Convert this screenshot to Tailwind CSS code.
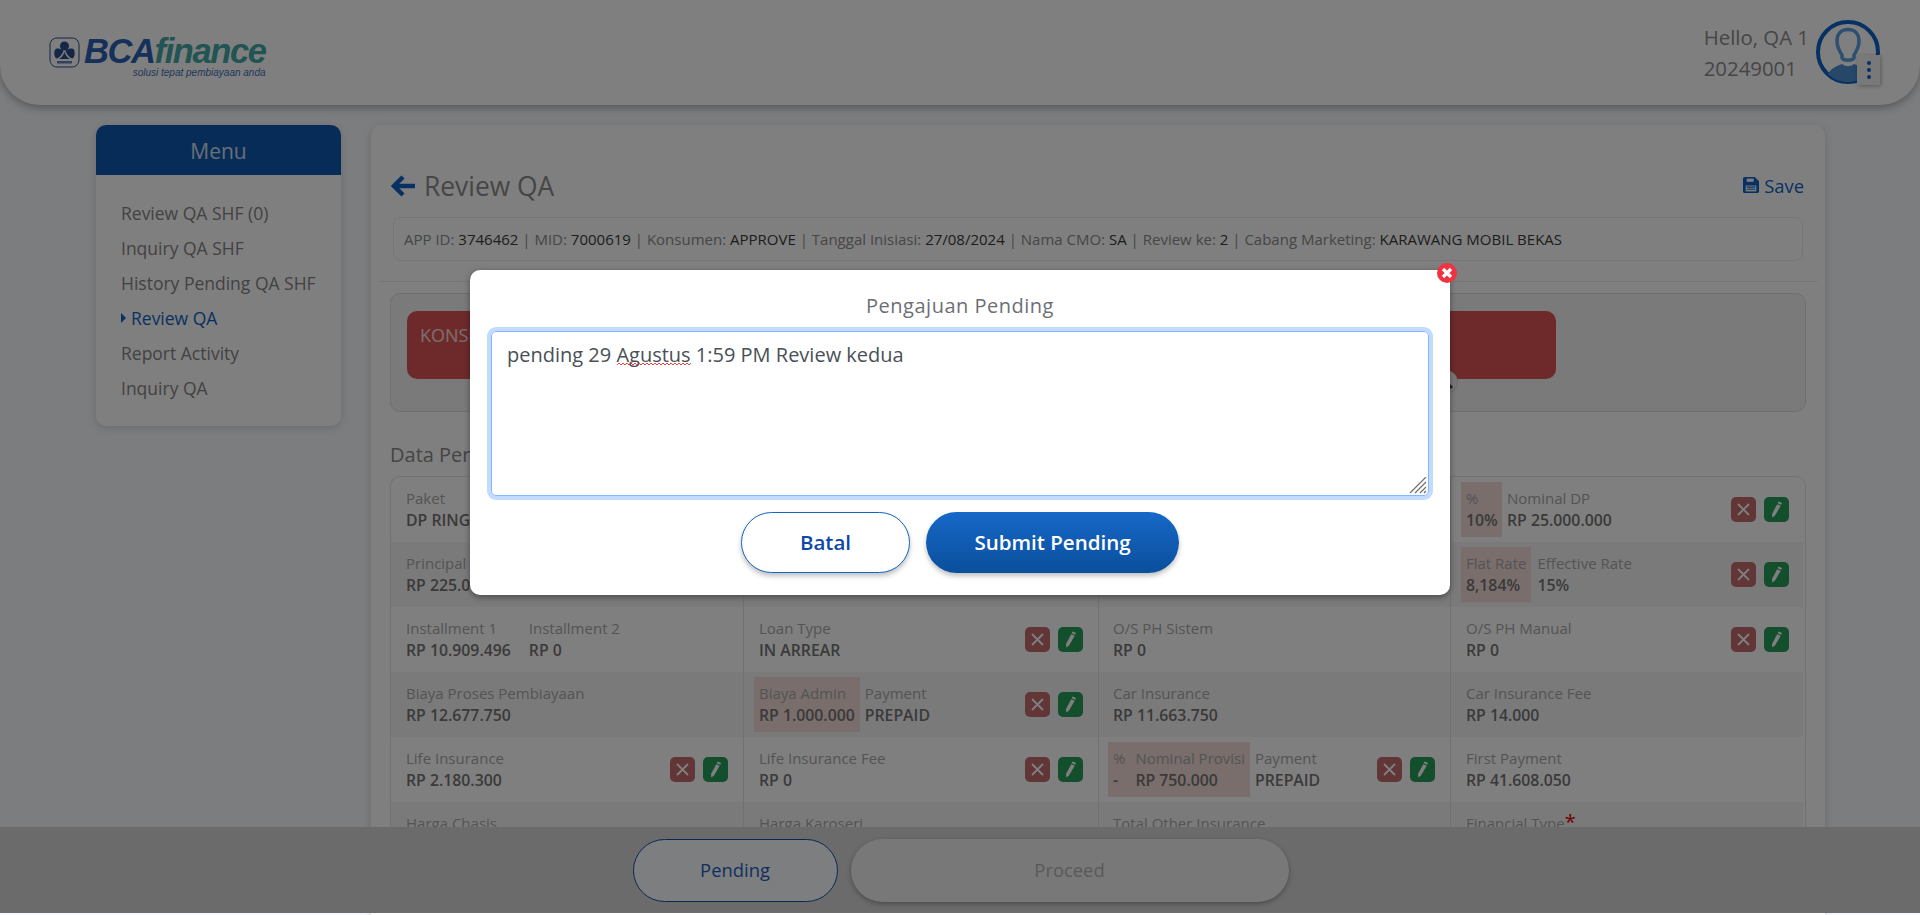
<!DOCTYPE html>
<html lang="id">
<head>
<meta charset="utf-8">
<title>Review QA</title>
<script src="https://cdn.jsdelivr.net/npm/@tailwindcss/browser@4"></script>
</head>
<body class="bg-black font-['Open_Sans',sans-serif]">
<div class="relative w-[1920px] h-[915px] overflow-hidden bg-[#f8fafd]">

  <!-- header -->
  <header class="relative z-10 h-[105px] bg-white rounded-b-[40px] shadow-[0_3px_8px_rgba(0,0,0,0.3)] flex items-center justify-between pl-[49px] pr-[40px]">
    <div class="flex items-start gap-[4px] mt-[9px]">
      <svg width="31" height="31" viewBox="0 0 31 31" class="mt-[1px]">
        <path d="M8 1H23C27 1 30 4 30 8V22C30 27 27 30 23 30H8C4 30 1 27 1 22V8C1 4 4 1 8 1Z" fill="none" stroke="#2a4f8c" stroke-width="1"/>
        <circle cx="15.500" cy="9" r="4.500" fill="#2a4f8c"/>
        <path d="M14.500 14C13 18 10 21 7.500 21.500C5 20 4.500 15 6.500 12C10 11 13 12 14.500 14ZM16.500 14C18 18 21 21 23.500 21.500C26 20 26.500 15 24.500 12C21 11 18 12 16.500 14ZM15.500 15C14 19 12 21 10 22H21C19 21 17 19 15.500 15Z" fill="#2a4f8c"/>
        <rect x="8" y="24" width="15" height="2.500" fill="#2a4f8c" opacity="0.7"/>
      </svg>
      <div class="flex flex-col items-end">
        <div class="leading-[30px] h-[30px] text-[34.500px] font-black italic font-['Liberation_Sans',sans-serif] tracking-[-1.400px]"><span class="text-[#2a60b4]">BCA</span><span class="text-[#43a8a4]">finance</span></div>
        <div class="mt-[2px] text-[10px] leading-[10px] italic font-['Liberation_Sans',sans-serif] text-[#3f70b5]">solusi tepat pembiayaan anda</div>
      </div>
    </div>
    <div class="flex items-center gap-[7px]">
      <div class="text-[20.400px] leading-[31px] text-[#8c8c8c]">
        <div>Hello, QA 1</div>
        <div>20249001</div>
      </div>
      <div class="relative w-[64px] h-[64px] -mt-[2px]">
        <svg width="64" height="64" viewBox="0 0 64 64">
          <circle cx="32" cy="32" r="30" fill="none" stroke="#0f63c4" stroke-width="4"/>
          <path d="M32 9.500C25 9.500 21 14 21 21C21 27 24 32 26 35V38C28 41 36 41 38 38V35C40 32 43 27 43 21C43 14 39 9.500 32 9.500Z" fill="none" stroke="#5aa0e0" stroke-width="3.500"/>
          <path d="M12 54C15 48 21 46 26 44C30 47 34 47 38 44C43 46 49 48 52 54C46 60 39 62 32 62C25 62 18 60 12 54Z" fill="#4f8fd0"/>
        </svg>
        <div class="absolute left-[41px] top-[35px] w-[23px] h-[30px] bg-[#f2f2f2] shadow-[1px_1px_4px_rgba(0,0,0,0.3)] flex flex-col items-center justify-center gap-[3px]">
          <span class="w-[4px] h-[4px] rounded-full bg-[#0f63c4]"></span>
          <span class="w-[4px] h-[4px] rounded-full bg-[#0f63c4]"></span>
          <span class="w-[4px] h-[4px] rounded-full bg-[#0f63c4]"></span>
        </div>
      </div>
    </div>
  </header>

  <div class="flex items-start gap-[30px] pl-[96px] pt-[20px]">
    <!-- sidebar -->
    <aside class="w-[245px] rounded-[10px] bg-white shadow-[0_2px_8px_rgba(0,0,0,0.15)] overflow-hidden">
      <div class="h-[50px] pt-[3px] bg-[#0f58ae] text-white/80 flex items-center justify-center text-[21px]">Menu</div>
      <ul class="pt-[21px] pb-[20px] pl-[25px] text-[17.500px] leading-[35px] text-[#858585]">
        <li>Review QA SHF (0)</li>
        <li>Inquiry QA SHF</li>
        <li>History Pending QA SHF</li>
        <li class="relative text-[#0f63c4] font-medium"><span class="absolute left-0 top-[12px] border-l-[5px] border-y-[5.500px] border-y-transparent border-l-[#0f63c4]"></span><span class="ml-[10px]">Review QA</span></li>
        <li>Report Activity</li>
        <li>Inquiry QA</li>
      </ul>
    </aside>

    <!-- content -->
    <main class="w-[1454px] h-[800px] rounded-[10px] bg-white shadow-[0_2px_8px_rgba(0,0,0,0.15)]">
      <div class="flex items-center justify-between pl-[20px] pr-[21px] pt-[31px] h-[92px]">
        <div class="flex items-center gap-[9px]">
          <svg width="24" height="24" viewBox="0 0 24 24"><path d="M12 3L3 12L12 21M4 12H24" fill="none" stroke="#0f63c4" stroke-width="4.500"/></svg>
          <h1 class="text-[26.400px] text-[#8c8c8c]">Review QA</h1>
        </div>
        <div class="flex items-center gap-[5px] -mt-[2px] text-[18.400px] text-[#0f63c4]">
          <svg width="16" height="16" viewBox="0 0 15 15"><path d="M0 1.500C0 .7.7 0 1.500 0H11L15 4V13.500C15 14.300 14.300 15 13.500 15H1.500C.7 15 0 14.300 0 13.500Z" fill="#0f63c4"/><rect x="3.500" y="1.500" width="6.500" height="3" fill="#fff"/><path d="M2.500 8H12.500V13.500H2.500Z" fill="#fff"/><path d="M3.500 9.500H11.500M3.500 11.500H11.500" stroke="#0f63c4"/></svg>
          <span>Save</span>
        </div>
      </div>

      <div class="mx-[22px] h-[44px] px-[10px] rounded-[8px] border border-[#ececec] flex items-center text-[15px] text-[#8c8c8c] whitespace-nowrap">
        <span>APP ID: <span class="text-[#3a3a3a]">3746462</span> | MID: <span class="text-[#3a3a3a]">7000619</span> | Konsumen: <span class="text-[#3a3a3a]">APPROVE</span> | Tanggal Inisiasi: <span class="text-[#3a3a3a]">27/08/2024</span> | Nama CMO: <span class="text-[#3a3a3a]">SA</span> | Review ke: <span class="text-[#3a3a3a]">2</span> | Cabang Marketing: <span class="text-[#3a3a3a]">KARAWANG MOBIL BEKAS</span></span>
      </div>

      <div class="mt-[20px] mx-[7px] border-t border-[#ececec]"></div>

      <div class="relative mt-[11px] mx-[19px] h-[119px] rounded-[10px] border border-[#dedede] bg-[#f5f5f5] pl-[16px] pt-[17px]">
        <div class="w-[1149px] h-[68px] rounded-[10px] bg-[#dd5555] text-white/80 text-[18px] pl-[13px] pt-[11px]">KONSUMEN</div>
        <div class="absolute left-[1043px] top-[76px] w-[24px] h-[24px] rounded-full bg-[#f2f2f2] border border-[#d5d5d5] flex items-center justify-center">
          <svg width="14" height="14" viewBox="0 0 14 14"><circle cx="6" cy="6" r="4" fill="none" stroke="#444" stroke-width="2"/><path d="M9 9L13 13" stroke="#444" stroke-width="3"/></svg>
        </div>
      </div>

      <h2 class="mt-[29px] ml-[19px] text-[20px] leading-[27px] text-[#8a8a8a]">Data Pengajuan</h2>

      <!-- data grid -->
      <div class="mt-[8px] mx-[19px] rounded-t-[10px] border border-[#e2e2e2] grid grid-cols-[353px_355px_352px_352px] text-[15px] leading-[22px] text-[#a8a8a8]">
        <!-- row 1 -->
        <div class="h-[65px] pl-[15px] pt-[10px] border-r border-[#e2e2e2]"><div>Paket</div><div class="text-[15.800px] font-semibold text-[#747474]">DP RINGAN</div></div>
        <div class="h-[65px] border-r border-[#e2e2e2]"></div>
        <div class="h-[65px] border-r border-[#e2e2e2]"></div>
        <div class="h-[65px] pl-[10px] pr-[14px] pt-[5px] flex items-start justify-between">
          <div class="flex gap-[5px]">
            <div class="h-[55px] w-[41px] bg-[#f2dcd8] px-[5px] py-[5px]"><div>%</div><div class="text-[15.800px] font-semibold text-[#747474]">10%</div></div>
            <div class="pt-[5px]"><div>Nominal DP</div><div class="text-[15.800px] font-semibold text-[#747474]">RP 25.000.000</div></div>
          </div>
          <div class="flex gap-[8px] mt-[15px]">
            <span class="w-[25px] h-[25px] rounded-[5px] bg-[#c46c6c] flex items-center justify-center"><svg width="13" height="13" viewBox="0 0 13 13"><path d="M1 1L12 12M12 1L1 12" stroke="#fff" stroke-width="1.800"/></svg></span>
            <span class="w-[25px] h-[25px] rounded-[5px] bg-[#289e5a] flex items-center justify-center"><svg width="13" height="17" viewBox="0 0 13 17"><path d="M8.500.5L12 2L11.200 3.800L7.700 2.300ZM7.200 3.300L10.700 4.800L5 14.500L2.300 16.500L2 13Z" fill="#fff"/></svg></span>
          </div>
        </div>
        <!-- row 2 -->
        <div class="h-[65px] pl-[15px] pt-[10px] bg-[#f5f5f5] border-r border-[#e2e2e2]"><div>Principal</div><div class="text-[15.800px] font-semibold text-[#747474]">RP 225.000.000</div></div>
        <div class="h-[65px] bg-[#f5f5f5] border-r border-[#e2e2e2]"></div>
        <div class="h-[65px] bg-[#f5f5f5] border-r border-[#e2e2e2]"></div>
        <div class="h-[65px] pl-[10px] pr-[14px] pt-[5px] bg-[#f5f5f5] flex items-start justify-between">
          <div class="flex gap-[6px]">
            <div class="h-[55px] bg-[#f2dcd8] px-[5px] py-[5px]"><div>Flat Rate</div><div class="text-[15.800px] font-semibold text-[#747474]">8,184%</div></div>
            <div class="pt-[5px]"><div>Effective Rate</div><div class="text-[15.800px] font-semibold text-[#747474]">15%</div></div>
          </div>
          <div class="flex gap-[8px] mt-[15px]">
            <span class="w-[25px] h-[25px] rounded-[5px] bg-[#c46c6c] flex items-center justify-center"><svg width="13" height="13" viewBox="0 0 13 13"><path d="M1 1L12 12M12 1L1 12" stroke="#fff" stroke-width="1.800"/></svg></span>
            <span class="w-[25px] h-[25px] rounded-[5px] bg-[#289e5a] flex items-center justify-center"><svg width="13" height="17" viewBox="0 0 13 17"><path d="M8.500.5L12 2L11.200 3.800L7.700 2.300ZM7.200 3.300L10.700 4.800L5 14.500L2.300 16.500L2 13Z" fill="#fff"/></svg></span>
          </div>
        </div>
        <!-- row 3 -->
        <div class="h-[65px] pl-[15px] pt-[10px] flex gap-[18px] border-r border-[#e2e2e2]">
          <div><div>Installment 1</div><div class="text-[15.800px] font-semibold text-[#747474]">RP 10.909.496</div></div>
          <div><div>Installment 2</div><div class="text-[15.800px] font-semibold text-[#747474]">RP 0</div></div>
        </div>
        <div class="h-[65px] pl-[15px] pr-[15px] pt-[10px] flex justify-between border-r border-[#e2e2e2]">
          <div><div>Loan Type</div><div class="text-[15.800px] font-semibold text-[#747474]">IN ARREAR</div></div>
          <div class="flex gap-[8px] mt-[10px]">
            <span class="w-[25px] h-[25px] rounded-[5px] bg-[#c46c6c] flex items-center justify-center"><svg width="13" height="13" viewBox="0 0 13 13"><path d="M1 1L12 12M12 1L1 12" stroke="#fff" stroke-width="1.800"/></svg></span>
            <span class="w-[25px] h-[25px] rounded-[5px] bg-[#289e5a] flex items-center justify-center"><svg width="13" height="17" viewBox="0 0 13 17"><path d="M8.500.5L12 2L11.200 3.800L7.700 2.300ZM7.200 3.300L10.700 4.800L5 14.500L2.300 16.500L2 13Z" fill="#fff"/></svg></span>
          </div>
        </div>
        <div class="h-[65px] pl-[14px] pt-[10px] border-r border-[#e2e2e2]"><div>O/S PH Sistem</div><div class="text-[15.800px] font-semibold text-[#747474]">RP 0</div></div>
        <div class="h-[65px] pl-[15px] pr-[14px] pt-[10px] flex justify-between">
          <div><div>O/S PH Manual</div><div class="text-[15.800px] font-semibold text-[#747474]">RP 0</div></div>
          <div class="flex gap-[8px] mt-[10px]">
            <span class="w-[25px] h-[25px] rounded-[5px] bg-[#c46c6c] flex items-center justify-center"><svg width="13" height="13" viewBox="0 0 13 13"><path d="M1 1L12 12M12 1L1 12" stroke="#fff" stroke-width="1.800"/></svg></span>
            <span class="w-[25px] h-[25px] rounded-[5px] bg-[#289e5a] flex items-center justify-center"><svg width="13" height="17" viewBox="0 0 13 17"><path d="M8.500.5L12 2L11.200 3.800L7.700 2.300ZM7.200 3.300L10.700 4.800L5 14.500L2.300 16.500L2 13Z" fill="#fff"/></svg></span>
          </div>
        </div>
        <!-- row 4 -->
        <div class="h-[65px] pl-[15px] pt-[10px] bg-[#f5f5f5] border-r border-[#e2e2e2]"><div>Biaya Proses Pembiayaan</div><div class="text-[15.800px] font-semibold text-[#747474]">RP 12.677.750</div></div>
        <div class="h-[65px] pl-[10px] pr-[15px] pt-[5px] bg-[#f5f5f5] flex justify-between border-r border-[#e2e2e2]">
          <div class="flex gap-[5px]">
            <div class="h-[55px] bg-[#f2dcd8] px-[5px] py-[5px]"><div>Biaya Admin</div><div class="text-[15.800px] font-semibold text-[#747474]">RP 1.000.000</div></div>
            <div class="pt-[5px]"><div>Payment</div><div class="text-[15.800px] font-semibold text-[#747474]">PREPAID</div></div>
          </div>
          <div class="flex gap-[8px] mt-[15px]">
            <span class="w-[25px] h-[25px] rounded-[5px] bg-[#c46c6c] flex items-center justify-center"><svg width="13" height="13" viewBox="0 0 13 13"><path d="M1 1L12 12M12 1L1 12" stroke="#fff" stroke-width="1.800"/></svg></span>
            <span class="w-[25px] h-[25px] rounded-[5px] bg-[#289e5a] flex items-center justify-center"><svg width="13" height="17" viewBox="0 0 13 17"><path d="M8.500.5L12 2L11.200 3.800L7.700 2.300ZM7.200 3.300L10.700 4.800L5 14.500L2.300 16.500L2 13Z" fill="#fff"/></svg></span>
          </div>
        </div>
        <div class="h-[65px] pl-[14px] pt-[10px] bg-[#f5f5f5] border-r border-[#e2e2e2]"><div>Car Insurance</div><div class="text-[15.800px] font-semibold text-[#747474]">RP 11.663.750</div></div>
        <div class="h-[65px] pl-[15px] pt-[10px] bg-[#f5f5f5]"><div>Car Insurance Fee</div><div class="text-[15.800px] font-semibold text-[#747474]">RP 14.000</div></div>
        <!-- row 5 -->
        <div class="h-[65px] pl-[15px] pr-[15px] pt-[10px] flex justify-between border-r border-[#e2e2e2]">
          <div><div>Life Insurance</div><div class="text-[15.800px] font-semibold text-[#747474]">RP 2.180.300</div></div>
          <div class="flex gap-[8px] mt-[10px]">
            <span class="w-[25px] h-[25px] rounded-[5px] bg-[#c46c6c] flex items-center justify-center"><svg width="13" height="13" viewBox="0 0 13 13"><path d="M1 1L12 12M12 1L1 12" stroke="#fff" stroke-width="1.800"/></svg></span>
            <span class="w-[25px] h-[25px] rounded-[5px] bg-[#289e5a] flex items-center justify-center"><svg width="13" height="17" viewBox="0 0 13 17"><path d="M8.500.5L12 2L11.200 3.800L7.700 2.300ZM7.200 3.300L10.700 4.800L5 14.500L2.300 16.500L2 13Z" fill="#fff"/></svg></span>
          </div>
        </div>
        <div class="h-[65px] pl-[15px] pr-[15px] pt-[10px] flex justify-between border-r border-[#e2e2e2]">
          <div><div>Life Insurance Fee</div><div class="text-[15.800px] font-semibold text-[#747474]">RP 0</div></div>
          <div class="flex gap-[8px] mt-[10px]">
            <span class="w-[25px] h-[25px] rounded-[5px] bg-[#c46c6c] flex items-center justify-center"><svg width="13" height="13" viewBox="0 0 13 13"><path d="M1 1L12 12M12 1L1 12" stroke="#fff" stroke-width="1.800"/></svg></span>
            <span class="w-[25px] h-[25px] rounded-[5px] bg-[#289e5a] flex items-center justify-center"><svg width="13" height="17" viewBox="0 0 13 17"><path d="M8.500.5L12 2L11.200 3.800L7.700 2.300ZM7.200 3.300L10.700 4.800L5 14.500L2.300 16.500L2 13Z" fill="#fff"/></svg></span>
          </div>
        </div>
        <div class="h-[65px] pl-[9px] pr-[15px] pt-[5px] flex justify-between border-r border-[#e2e2e2]">
          <div class="flex gap-[5px]">
            <div class="h-[55px] bg-[#f2dcd8] px-[5px] py-[5px] flex gap-[10px]">
              <div><div>%</div><div class="text-[15.800px] font-semibold text-[#747474]">-</div></div>
              <div><div>Nominal Provisi</div><div class="text-[15.800px] font-semibold text-[#747474]">RP 750.000</div></div>
            </div>
            <div class="pt-[5px]"><div>Payment</div><div class="text-[15.800px] font-semibold text-[#747474]">PREPAID</div></div>
          </div>
          <div class="flex gap-[8px] mt-[15px]">
            <span class="w-[25px] h-[25px] rounded-[5px] bg-[#c46c6c] flex items-center justify-center"><svg width="13" height="13" viewBox="0 0 13 13"><path d="M1 1L12 12M12 1L1 12" stroke="#fff" stroke-width="1.800"/></svg></span>
            <span class="w-[25px] h-[25px] rounded-[5px] bg-[#289e5a] flex items-center justify-center"><svg width="13" height="17" viewBox="0 0 13 17"><path d="M8.500.5L12 2L11.200 3.800L7.700 2.300ZM7.200 3.300L10.700 4.800L5 14.500L2.300 16.500L2 13Z" fill="#fff"/></svg></span>
          </div>
        </div>
        <div class="h-[65px] pl-[15px] pt-[10px]"><div>First Payment</div><div class="text-[15.800px] font-semibold text-[#747474]">RP 41.608.050</div></div>
        <!-- row 6 -->
        <div class="h-[65px] pl-[15px] pt-[10px] bg-[#f5f5f5] border-r border-[#e2e2e2]"><div>Harga Chasis</div></div>
        <div class="h-[65px] pl-[15px] pt-[10px] bg-[#f5f5f5] border-r border-[#e2e2e2]"><div>Harga Karoseri</div></div>
        <div class="h-[65px] pl-[14px] pt-[10px] bg-[#f5f5f5] border-r border-[#e2e2e2]"><div>Total Other Insurance</div></div>
        <div class="h-[65px] pl-[15px] pt-[10px] bg-[#f5f5f5]"><div>Financial Type<span class="text-[#e00000] text-[20px] leading-[10px]">*</span></div></div>
      </div>
    </main>
  </div>

  <!-- footer bar -->
  <div class="absolute z-10 left-0 right-0 top-[827px] h-[86px] bg-[#d6d6d6] flex justify-center items-center gap-[13px] pl-[1px]">
    <div class="w-[205px] h-[63px] rounded-full border border-[#1052a8] bg-[#fbfdff] text-[#1f5fc0] text-[18.400px] font-medium flex items-center justify-center">Pending</div>
    <div class="w-[438px] h-[63px] rounded-full bg-[#f0f0f0] text-[#b4b4b4] text-[18.400px] font-medium flex items-center justify-center shadow-[0_2px_5px_rgba(0,0,0,0.3)]">Proceed</div>
  </div>

  <!-- overlay -->
  <div class="absolute z-20 inset-x-0 top-0 h-[913px] bg-black/50"></div>

  <!-- modal -->
  <div class="absolute z-30 left-[470px] top-[270px] w-[980px] h-[325px] rounded-[10px] bg-white shadow-[0_2px_6px_rgba(0,0,0,0.4)] flex flex-col items-center">
    <div class="absolute -top-[7px] -right-[7px] w-[20px] h-[20px] rounded-full bg-[#ef3340] flex items-center justify-center">
      <svg width="12" height="12" viewBox="0 0 12 12"><path d="M2 2L10 10M10 2L2 10" stroke="#fff" stroke-width="3.200"/></svg>
    </div>
    <h3 class="mt-[22px] text-[20px] leading-[28px] tracking-[0.5px] text-[#6c7075]">Pengajuan Pending</h3>
    <div class="relative mt-[11px] w-[938px] h-[165px]">
      <textarea spellcheck="false" class="block w-full h-full resize-none rounded-[5px] border border-[#86b7fe] shadow-[0_0_0_4px_rgba(13,110,253,0.25)] outline-none px-[15px] py-[8px] text-[20px] leading-[30px] text-[#495057]">pending 29 Agustus 1:59 PM Review kedua</textarea>
      <svg class="absolute left-[126px] top-[31px]" width="75" height="4" viewBox="0 0 75 4"><path d="M0 3L2 1L4 3L6 1L8 3L10 1L12 3L14 1L16 3L18 1L20 3L22 1L24 3L26 1L28 3L30 1L32 3L34 1L36 3L38 1L40 3L42 1L44 3L46 1L48 3L50 1L52 3L54 1L56 3L58 1L60 3L62 1L64 3L66 1L68 3L70 1L72 3L74 1" fill="none" stroke="#e23030" stroke-width="0.900"/></svg>
      <svg class="absolute right-[2px] bottom-[2px]" width="18" height="17" viewBox="0 0 18 17"><path d="M1 16L17 0M6 16L17 5M11 16L17 10M15 16L17 14" stroke="#6f6f6f" stroke-width="1.200" fill="none"/></svg>
    </div>
    <div class="mt-[16px] flex gap-[16px]">
      <div class="w-[169px] h-[61px] rounded-full border border-[#1565c0] bg-white text-[#0d47a8] text-[20.500px] font-semibold flex items-center justify-center shadow-[0_3px_5px_rgba(0,0,0,0.25)]">Batal</div>
      <div class="w-[253px] h-[61px] rounded-full bg-gradient-to-b from-[#1668c8] to-[#0b4f9c] text-white text-[20.500px] font-semibold flex items-center justify-center shadow-[0_3px_5px_rgba(0,0,0,0.25)]">Submit Pending</div>
    </div>
  </div>
</div>
</body>
</html>
